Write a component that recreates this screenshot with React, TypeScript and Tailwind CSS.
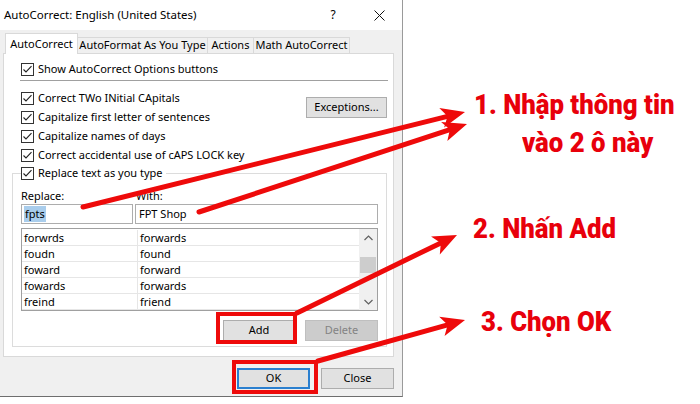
import type { ReactNode } from "react";

const entries = [
  ["forwrds", "forwards"],
  ["foudn", "found"],
  ["foward", "forward"],
  ["fowards", "forwards"],
  ["freind", "friend"],
];

function CheckBox() {
  return (
    <svg width="13" height="13" viewBox="0 0 13 13" className="shrink-0">
      <rect x="0.5" y="0.5" width="12" height="12" fill="#fff" stroke="#333" />
      <path d="M2.5 6.5 L5 9 L10.5 3.2" fill="none" stroke="#222" strokeWidth="1.1" />
    </svg>
  );
}

function CheckRow({ label, className = "h-[19px]" }: { label: string; className?: string }) {
  return (
    <div className={`flex items-center gap-[4px] ${className}`}>
      <CheckBox />
      <span>{label}</span>
    </div>
  );
}

function Button({ children, className = "" }: { children: ReactNode; className?: string }) {
  return (
    <div className={`flex h-[21px] items-center justify-center border ${className}`}>
      {children}
    </div>
  );
}

function Chevron({ up }: { up?: boolean }) {
  return (
    <svg width="9" height="6" viewBox="0 0 9 6">
      <path
        d={up ? "M0.5 5 L4.5 1 L8.5 5" : "M0.5 1 L4.5 5 L8.5 1"}
        fill="none"
        stroke="#606060"
        strokeWidth="1.2"
      />
    </svg>
  );
}

// red callout arrow with a notched head
function Arrow({ from, to }: { from: [number, number]; to: [number, number] }) {
  const [x1, y1] = from;
  const [x2, y2] = to;
  const len = Math.hypot(x2 - x1, y2 - y1);
  const ux = (x2 - x1) / len;
  const uy = (y2 - y1) / len;
  const px = -uy;
  const py = ux;
  const L = 24;
  const W = 10;
  const bx = x2 - ux * L;
  const by = y2 - uy * L;
  const nx = bx + ux * 6;
  const ny = by + uy * 6;
  return (
    <g>
      <line x1={x1} y1={y1} x2={nx} y2={ny} stroke="#ee0a0a" strokeWidth="5" strokeLinecap="round" />
      <polygon
        points={`${x2},${y2} ${bx + px * W},${by + py * W} ${nx},${ny} ${bx - px * W},${by - py * W}`}
        fill="#ee0a0a"
      />
    </g>
  );
}

function Dialog() {
  return (
    <div className="flex h-[397px] w-[403px] shrink-0 flex-col border-r border-b border-r-[#9a9a9a] border-b-[#6e6e6e] bg-[#f0f0f0] font-['Noto_Sans','Open_Sans',sans-serif] text-[11px] whitespace-nowrap text-black">
      {/* title bar */}
      <div className="flex h-[30px] items-center bg-white pl-[4px] text-[11.5px]">
        <span className="flex-1">AutoCorrect: English (United States)</span>
        <span className="w-[46px] text-center text-[12px]">?</span>
        <span className="flex w-[46px] justify-center">
          <svg width="11" height="11" viewBox="0 0 11 11">
            <path d="M0.5 0.5 L10.5 10.5 M10.5 0.5 L0.5 10.5" stroke="#111" strokeWidth="1" />
          </svg>
        </span>
      </div>

      {/* tabs */}
      <div className="flex h-[23px] items-end pl-[5px]">
        <div className="relative z-10 -mb-px flex h-[21px] w-[73px] items-center justify-center border-x border-t border-[#d9d9d9] bg-white">
          AutoCorrect
        </div>
        <div className="flex h-[16px] w-[130px] items-center justify-center border-t border-r border-[#d9d9d9]">
          AutoFormat As You Type
        </div>
        <div className="flex h-[16px] w-[46px] items-center justify-center border-t border-r border-[#d9d9d9]">
          Actions
        </div>
        <div className="flex h-[16px] w-[96px] items-center justify-center border-t border-r border-[#d9d9d9]">
          Math AutoCorrect
        </div>
      </div>

      {/* tab page */}
      <div className="ml-[3px] h-[304px] w-[391px] border border-[#d9d9d9] bg-white pt-[7px]">
        <div className="pl-[17px]">
          <CheckRow label="Show AutoCorrect Options buttons" className="h-[16px]" />
        </div>
        <div className="mt-[3px] mr-[5px] ml-[16px] h-px bg-[#a0a0a0]" />

        <div className="mt-[8px] flex justify-between pr-[6px] pl-[17px]">
          <div className="flex flex-col">
            <CheckRow label="Correct TWo INitial CApitals" />
            <CheckRow label="Capitalize first letter of sentences" />
            <CheckRow label="Capitalize names of days" />
            <CheckRow label="Correct accidental use of cAPS LOCK key" />
          </div>
          <Button className="mt-[8px] w-[81px] border-[#adadad] bg-[#e1e1e1]">Exceptions...</Button>
        </div>

        <fieldset className="mr-[6px] ml-[8px] border border-[#dcdcdc] px-[8px] pb-[5px]">
          <legend className="pr-[3px]">
            <CheckRow label="Replace text as you type" className="h-[16px]" />
          </legend>

          <div className="mt-[7px] flex h-[16px] items-center">
            <span className="w-[115px]">Replace:</span>
            <span>With:</span>
          </div>
          <div className="flex gap-[2px]">
            <div className="flex h-[20px] w-[112px] items-center border border-[#adadad] pl-[2px]">
              <span className="bg-[#a9cdec] px-px">fpts</span>
            </div>
            <div className="flex h-[20px] w-[243px] items-center border border-[#adadad] pl-[3px]">
              FPT Shop
            </div>
          </div>

          <div className="mt-[4px] flex h-[83px] border border-[#a0a0a0] pt-px">
            <div className="flex flex-1 flex-col">
              {entries.map(([wrong, right]) => (
                <div key={wrong} className="flex h-[16px] border-b border-[#e6e6e6] leading-[15px]">
                  <span className="w-[116px] border-r border-[#e6e6e6] pl-[2px]">{wrong}</span>
                  <span className="pl-[2px]">{right}</span>
                </div>
              ))}
            </div>
            <div className="-mt-px flex w-[18px] flex-col items-center bg-[#f0f0f0]">
              <div className="flex h-[17px] items-center">
                <Chevron up />
              </div>
              <div className="mt-[11px] h-[16px] w-[16px] bg-[#cdcdcd]" />
              <div className="flex-1" />
              <div className="flex h-[17px] items-center">
                <Chevron />
              </div>
            </div>
          </div>

          <div className="mt-[9px] flex justify-end gap-[10px]">
            <Button className="w-[72px] border-[#adadad] bg-[#e1e1e1]">Add</Button>
            <Button className="w-[73px] border-[#bfbfbf] bg-[#cccccc] text-[#838383]">Delete</Button>
          </div>
        </fieldset>
      </div>

      {/* dialog buttons */}
      <div className="flex justify-end gap-[11px] pt-[11px] pr-[8px]">
        <Button className="h-[20px] w-[73px] border-2 border-[#2a7fcf] bg-[#e1e1e1]">OK</Button>
        <Button className="h-[20px] w-[73px] border-[#adadad] bg-[#e1e1e1]">Close</Button>
      </div>
    </div>
  );
}

export default function App() {
  return (
    <div className="relative flex h-[404px] w-[700px] overflow-hidden bg-white">
      <Dialog />

      {/* step captions, narrowed to a condensed look */}
      <div className="flex flex-col items-start pt-[91px] font-['Roboto',sans-serif] text-[28px] leading-[28px] font-black whitespace-nowrap text-[#e8000b] [&>div]:origin-left [&>div]:scale-x-[0.92]">
        <div className="ml-[71px]">1. Nhập thông tin</div>
        <div className="mt-[10px] ml-[119px]">vào 2 ô này</div>
        <div className="mt-[58px] ml-[70px]">2. Nhấn Add</div>
        <div className="mt-[65px] ml-[78px]">3. Chọn OK</div>
      </div>

      <svg className="pointer-events-none absolute inset-0" width="700" height="404" viewBox="0 0 700 404">
        <rect x="218" y="314" width="77" height="28" fill="none" stroke="#ee0a0a" strokeWidth="4" />
        <rect x="234" y="362" width="82" height="30" fill="none" stroke="#ee0a0a" strokeWidth="4" />
        <Arrow from={[83, 207]} to={[465, 112]} />
        <Arrow from={[199, 212]} to={[467, 124]} />
        <Arrow from={[297, 313]} to={[457, 235]} />
        <Arrow from={[318, 361]} to={[465, 320]} />
      </svg>
    </div>
  );
}
